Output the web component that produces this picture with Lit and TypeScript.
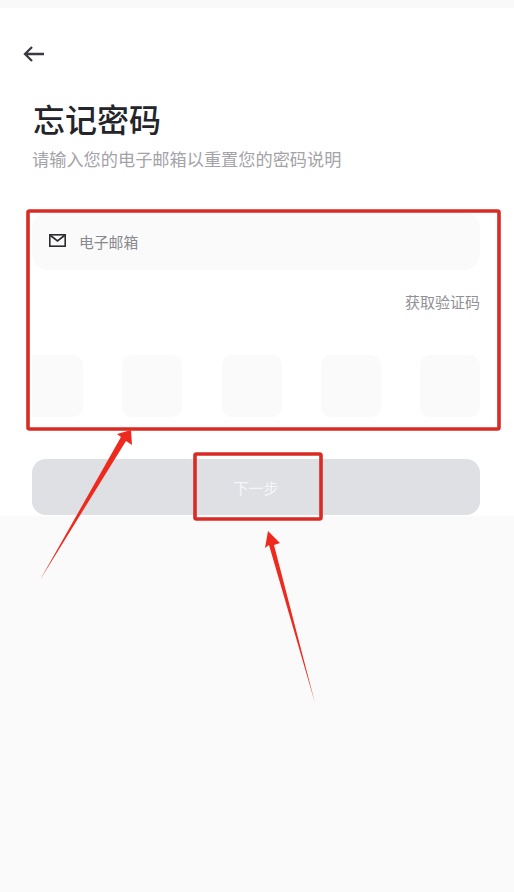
import { LitElement, html, css, svg } from "lit";
import { customElement } from "lit/decorators.js";

@customElement("app-root")
export class AppRoot extends LitElement {
  static styles = css`
    :host {
      display: block;
      position: relative;
      width: 514px;
      height: 892px;
      overflow: hidden;
      background: #fafafa;
      font-family: "Noto Sans CJK SC", "Noto Sans", sans-serif;
    }
    .strip { height: 8px; background: #f9f9f9; }
    .page {
      height: 508px;
      box-sizing: border-box;
      background: #fff;
      padding: 36px 34px 0 32px;
      display: flex;
      flex-direction: column;
    }
    .back { display: block; width: 24px; height: 20px; margin-left: -10px; color: #3a3a40; }
    .title {
      margin: 32px 0 0 1px;
      font-size: 32px;
      line-height: 44px;
      font-weight: 500;
      color: #24252a;
    }
    .sub {
      margin: 7px 0 0;
      font-size: 17.2px;
      line-height: 24px;
      color: #a3a3a8;
      white-space: nowrap;
    }
    .input {
      margin-top: 42px;
      height: 57px;
      border-radius: 16px;
      background: #fafafa;
      display: flex;
      align-items: center;
      padding-left: 17px;
      gap: 13px;
      font-size: 14.8px;
      color: #88888d;
    }
    .mail { width: 17px; height: 13px; color: #2b2b30; flex: none; margin-top: -2px; }
    .link {
      margin-top: 21px;
      text-align: right;
      font-size: 15px;
      line-height: 22px;
      color: #909095;
    }
    .codes {
      margin-top: 42px;
      display: flex;
      justify-content: space-between;
    }
    .code { width: 60px; height: 62px; border-radius: 10px; background: #fafafa; }
    .code.first { width: 51px; border-radius: 0 10px 10px 0; }
    .next {
      margin-top: 42px;
      height: 56px;
      border-radius: 14px;
      background: #dfe0e4;
      color: #f6f6f8;
      display: flex;
      align-items: center;
      justify-content: center;
      font-size: 15px;
    }
    .marks { position: absolute; inset: 0; width: 514px; height: 892px; pointer-events: none; }
  `;

  render() {
    return html`
      <div class="strip"></div>
      <div class="page">
        <svg class="back" viewBox="0 0 24 20" fill="none" stroke="currentColor" stroke-width="2.3">
          <path d="M22 10H3M10 3 3 10l7 7" />
        </svg>
        <div class="title">忘记密码</div>
        <div class="sub">请输入您的电子邮箱以重置您的密码说明</div>
        <div class="input">
          <svg class="mail" viewBox="0 0 17 13" fill="none" stroke="currentColor" stroke-width="1.6">
            <rect x="0.8" y="0.8" width="15.4" height="11.4" />
            <path d="M1.5 1.5 8.5 7l7-5.5" />
          </svg>
          <span>电子邮箱</span>
        </div>
        <div class="link">获取验证码</div>
        <div class="codes">
          <div class="code first"></div>
          <div class="code"></div>
          <div class="code"></div>
          <div class="code"></div>
          <div class="code"></div>
        </div>
        <div class="next">下一步</div>
      </div>
      <svg class="marks" viewBox="0 0 514 892">
        ${svg`
          <rect x="28" y="211" width="471" height="218" rx="1.5" fill="none" stroke="#d92b25" stroke-width="3.6" />
          <rect x="195" y="454" width="126" height="65" rx="1.5" fill="none" stroke="#d92b25" stroke-width="3.6" />
          <path d="M131 430 132 445 126 441 40 580 121 437 117 434Z" fill="#ee2a1e" />
          <path d="M268 531 280 543 274 545 315 703 269 545 265 548Z" fill="#ee2a1e" />
        `}
      </svg>
    `;
  }
}
